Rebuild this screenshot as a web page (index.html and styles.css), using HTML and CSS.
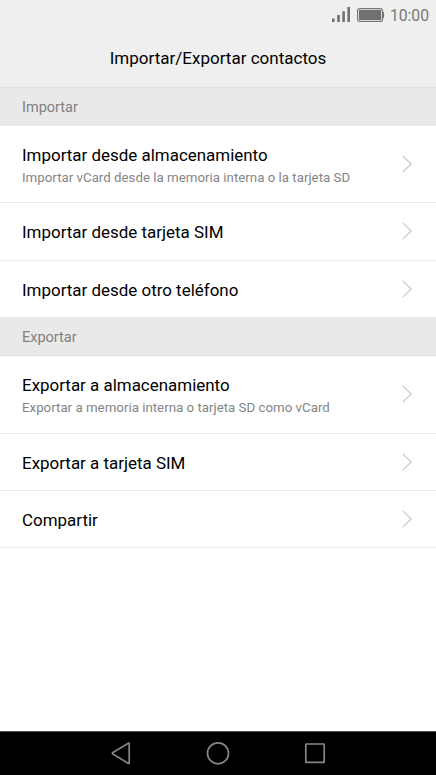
FILE: index.html
```html
<!DOCTYPE html>
<html lang="es"><head><meta charset="utf-8"><title>Importar/Exportar contactos</title><link rel="stylesheet" href="styles.css"></head>
<body>
<div class="status">
<svg class="signal" width="18" height="15" viewBox="0 0 18 15"><path d="M0 11.500h2.600V15H0zM5.200 8h2.600v7H5.200zM10.300 4.200h2.600V15h-2.600zM15.400 0H18v15h-2.600z"/></svg>
<svg class="battery" width="28" height="14" viewBox="0 0 28 14"><rect x=".6" y=".6" width="24.800" height="12.800" rx="2" fill="none" stroke="#777" stroke-width="1.200"/><path d="M2 2h22v10H2zM25.500 3.500c1.600.3 1.600 1 1.600 3.500s0 3.200-1.600 3.500z"/></svg>
<span class="clock">10:00</span></div>
<header class="title"><h1>Importar/Exportar contactos</h1></header>
<main>
<h2 class="section">Importar</h2>
<div class="row tall first"><div><p class="name">Importar desde almacenamiento</p><p class="sub">Importar vCard desde la memoria interna o la tarjeta SD</p></div><svg class="chev" width="10" height="18" viewBox="0 0 10 18"><path d="M.8.800 9.200 9l-8.400 8.200"/></svg></div>
<div class="row second"><p class="name">Importar desde tarjeta SIM</p><svg class="chev" width="10" height="18" viewBox="0 0 10 18"><path d="M.8.800 9.200 9l-8.400 8.200"/></svg></div>
<div class="row last"><p class="name">Importar desde otro teléfono</p><svg class="chev" width="10" height="18" viewBox="0 0 10 18"><path d="M.8.800 9.200 9l-8.400 8.200"/></svg></div>
<h2 class="section export">Exportar</h2>
<div class="row tall"><div><p class="name">Exportar a almacenamiento</p><p class="sub">Exportar a memoria interna o tarjeta SD como vCard</p></div><svg class="chev" width="10" height="18" viewBox="0 0 10 18"><path d="M.8.800 9.200 9l-8.400 8.200"/></svg></div>
<div class="row"><p class="name">Exportar a tarjeta SIM</p><svg class="chev" width="10" height="18" viewBox="0 0 10 18"><path d="M.8.800 9.200 9l-8.400 8.200"/></svg></div>
<div class="row"><p class="name">Compartir</p><svg class="chev" width="10" height="18" viewBox="0 0 10 18"><path d="M.8.800 9.200 9l-8.400 8.200"/></svg></div>
</main>
<nav><svg width="24" height="26" viewBox="0 0 24 26"><path d="M20.200 3.200v20.200h-.8L3.500 13.800v-1L19.400 3.200z"/></svg><svg width="24" height="26" viewBox="0 0 24 26"><circle cx="12" cy="13.300" r="10.500"/></svg><svg width="24" height="26" viewBox="0 0 24 26"><rect x="2.800" y="4" width="18.400" height="18.400" rx=".5"/></svg></nav>
</body></html>
```
FILE: styles.css
```css
* { box-sizing: border-box; }
body { margin: 0; width: 436px; height: 775px; display: flex; flex-direction: column; background: #fff; font-family: Roboto, sans-serif; color: #000; overflow: hidden; }
h1, h2, p { margin: 0; font-weight: 400; white-space: nowrap; }
.status { height: 31px; background: #efefef; display: flex; align-items: center; justify-content: flex-end; padding-right: 7px; }
.status svg { fill: #707070; }
.signal { margin: 0 7px 2px 0; }
.battery { margin: 0 5px 1px 0; }
.clock { font-size: 15.700px; color: #777; }
.title { height: 57px; padding-bottom: 2px; background: #efefef; border-bottom: 1px solid #e0e0e0; display: flex; align-items: center; justify-content: center; }
h1 { font-size: 17.030px; }
main { flex: 1; }
.section { height: 38px; background: #e9e9e9; padding-left: 22px; font-size: 14.500px; line-height: 39px; color: #808080; }
.export { height: 39px; line-height: 41px; border-bottom: 1px solid #dfdfdf; }
.row { height: 57px; padding: 0 24px 0 22px; display: flex; align-items: center; justify-content: space-between; border-bottom: 1px solid #ebebeb; }
.row.tall { height: 78px; }
.row.tall > div { padding-top: 1px; }
.row.first { height: 77px; }
.row.first > div { padding-top: 2px; }
.row.second { height: 58px; padding-bottom: 1px; }
.row.last { height: 56px; border-bottom: 0; }
.name { font-size: 16.950px; line-height: 24px; }
.row > .name { padding-top: 2px; }
.row.last > .name { padding-top: 1px; }
.sub { font-size: 13.300px; line-height: 21px; color: #858585; }
.chev { fill: none; stroke: #c4c4c4; stroke-width: 1.100; margin-bottom: 1px; }
nav { height: 44px; padding-bottom: 2px; background: #000; border-top: 1px solid #4a5552; display: flex; align-items: center; justify-content: center; gap: 73px; }
nav svg { fill: none; stroke: #858585; stroke-width: 1.700; stroke-linejoin: round; }
```
